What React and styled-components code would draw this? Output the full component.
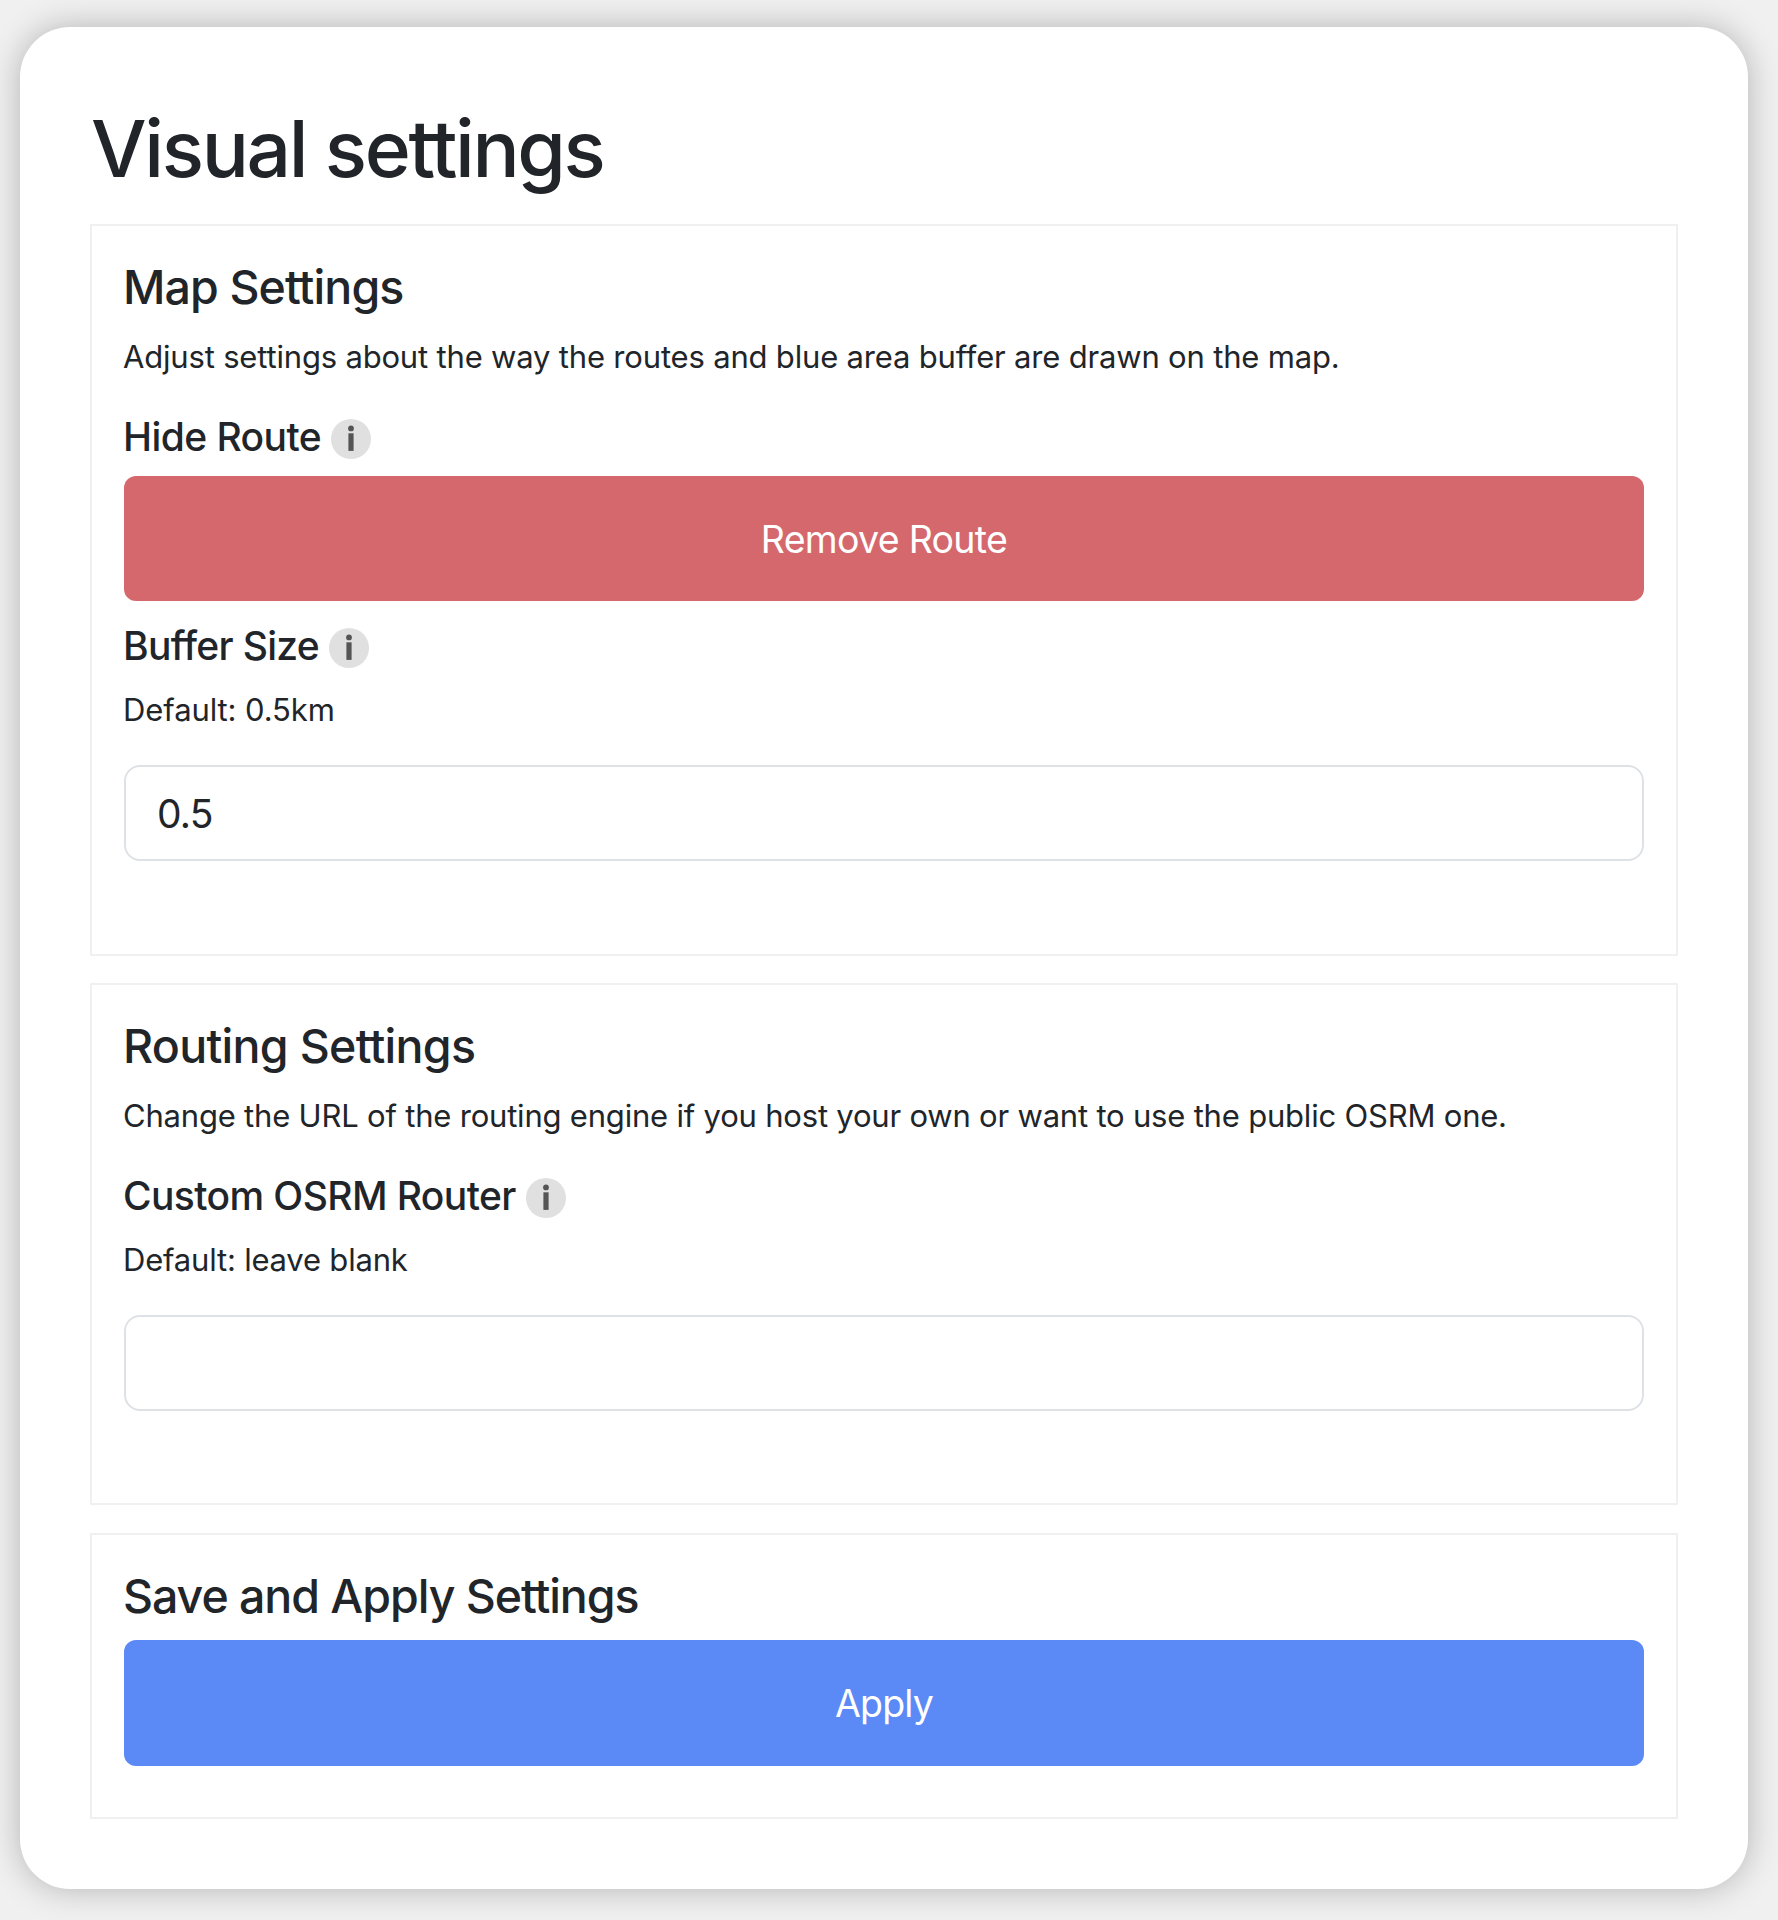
import React from "react";
import styled, { createGlobalStyle } from "styled-components";

const GlobalStyle = createGlobalStyle`
  *, *::before, *::after { box-sizing: border-box; }
  body {
    margin: 0;
    background: #f0f0f0;
    color: #212529;
    font-family: Inter, "Liberation Sans", sans-serif;
    font-size: 31px;
    overflow: hidden;
  }
`;

const Page = styled.div`
  height: 1920px;
  padding: 27px 30px 31px 20px;
`;

const Card = styled.main`
  display: flex;
  flex-direction: column;
  height: 1862px;
  padding: 74px 70px 70px;
  border-radius: 50px;
  background: #fff;
  box-shadow: 0 0 32px rgba(0, 0, 0, 0.25);
`;

const Title = styled.h1`
  margin: 0 0 27px 1px;
  font-size: 78.5px;
  font-weight: 550;
  line-height: 96px;
  letter-spacing: -2.35px;
`;

const Panel = styled.section`
  display: flex;
  flex-direction: column;
  height: ${(p) => p.$height}px;
  margin-bottom: ${(p) => p.$gap ?? 0}px;
  padding: 32px;
  border: 2px solid #f0f0f0;
`;

const PanelTitle = styled.h2`
  margin: 0 0 ${(p) => p.$gap ?? 17}px -1px;
  font-size: 46.5px;
  font-weight: 550;
  line-height: 58px;
  letter-spacing: ${(p) => p.$tracking}px;
`;

const Text = styled.p`
  margin: 0 0 ${(p) => p.$gap ?? 32}px -1px;
  line-height: 48px;
  letter-spacing: ${(p) => p.$tracking ?? 0}px;
  white-space: nowrap;
`;

const FieldTitle = styled.h3`
  display: flex;
  align-items: center;
  gap: 10px;
  height: 48px;
  margin: 0 0 ${(p) => p.$gap ?? 16}px -1px;
  font-size: 39px;
  font-weight: 550;
  line-height: 48px;
  letter-spacing: ${(p) => p.$tracking}px;
`;

const InfoBadge = styled.span`
  display: inline-flex;
  flex: none;
  width: 40px;
  height: 40px;
  margin-top: 4px;
  border-radius: 50%;
  background: #e0e0e0;
`;

const Button = styled.button`
  flex: none;
  width: 100%;
  height: ${(p) => p.$height}px;
  margin: 0 0 ${(p) => p.$gap ?? 0}px;
  padding: 1px 0 0;
  border: 0;
  border-radius: 12px;
  background: ${(p) => p.$color};
  color: #fff;
  font: inherit;
  font-size: 37.5px;
  letter-spacing: ${(p) => p.$tracking}px;
`;

const Input = styled.input`
  flex: none;
  width: 100%;
  height: 96px;
  padding: 0 31px;
  border: 2px solid #dee2e6;
  border-radius: 16px;
  background: #fff;
  color: #212529;
  font: inherit;
  font-size: 39px;
  letter-spacing: -0.8px;
  outline: none;
`;

const Info = () => (
  <InfoBadge>
    <svg width="40" height="40" viewBox="0 0 40 40" fill="#555" aria-label="Info">
      <circle cx="20" cy="9.4" r="2.9" />
      <rect x="17.4" y="14.3" width="5.2" height="17.6" />
    </svg>
  </InfoBadge>
);

export default function App() {
  return (
    <>
      <GlobalStyle />
      <Page>
        <Card>
          <Title>Visual settings</Title>
          <Panel $height={732} $gap={27}>
            <PanelTitle $tracking={-0.9}>Map Settings</PanelTitle>
            <Text $tracking={-0.18}>
              Adjust settings about the way the routes and blue area buffer are drawn on the map.
            </Text>
            <FieldTitle $tracking={-0.57} $gap={15}>
              Hide Route
              <Info />
            </FieldTitle>
            <Button $color="#d5686d" $height={125} $gap={21} $tracking={-0.7}>
              Remove Route
            </Button>
            <FieldTitle $tracking={-0.68}>
              Buffer Size
              <Info />
            </FieldTitle>
            <Text $gap={31} $tracking={-0.1}>
              Default: 0.5km
            </Text>
            <Input defaultValue="0.5" />
          </Panel>
          <Panel $height={522} $gap={28}>
            <PanelTitle $tracking={-0.7}>Routing Settings</PanelTitle>
            <Text $tracking={-0.2}>
              Change the URL of the routing engine if you host your own or want to use the public OSRM one.
            </Text>
            <FieldTitle $tracking={-0.6}>
              Custom OSRM Router
              <Info />
            </FieldTitle>
            <Text $gap={31} $tracking={-0.2}>
              Default: leave blank
            </Text>
            <Input />
          </Panel>
          <Panel $height={286}>
            <PanelTitle $tracking={-1.05} $gap={15}>
              Save and Apply Settings
            </PanelTitle>
            <Button $color="#5b89f5" $height={126} $tracking={-0.8}>
              Apply
            </Button>
          </Panel>
        </Card>
      </Page>
    </>
  );
}
